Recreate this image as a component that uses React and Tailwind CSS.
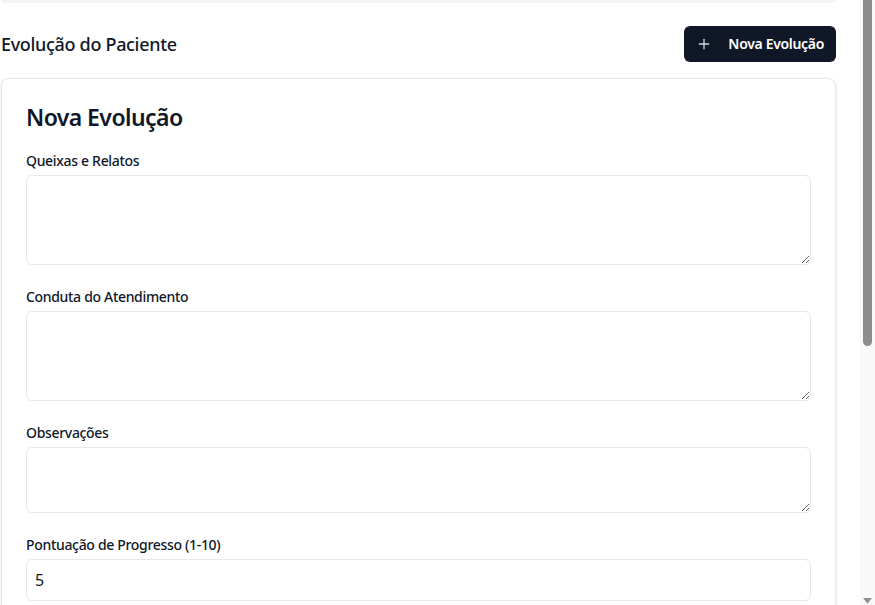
import { Plus } from 'lucide-react';

const Field = ({ label, children }) => (
  <div className="flex flex-col gap-[7px]">
    <label className="text-sm font-medium leading-none text-gray-900">{label}</label>
    {children}
  </div>
);

// the page's own scrollbar, as the screenshot shows it
const Scrollbar = () => (
  <div className="flex h-full w-[15px] shrink-0 flex-col items-center bg-[#f9f9f9]">
    <div className="h-[346px] w-[9px] rounded-b-full bg-[#8d8d8d]" />
    <div className="flex-1" />
    <svg width="9" height="6" viewBox="0 0 9 6" className="mb-[1px]">
      <path d="M0 0 H9 L4.5 5.5 Z" fill="#8d8d8d" />
    </svg>
  </div>
);

const App = () => {
  return (
    <div
      className="flex h-screen overflow-hidden bg-white text-gray-900 tracking-[-0.02em]"
      style={{ fontFamily: '"Noto Sans", "Open Sans", Arial, sans-serif' }}
    >
      <div className="w-[860px] shrink-0 overflow-hidden pr-6">
        <div className="ml-[1px] h-[3px] rounded-b-lg bg-gray-100" />

        <div className="mt-[23px] mb-4 flex items-center justify-between pl-[1px]">
          <h2 className="text-lg font-medium text-gray-900">Evolução do Paciente</h2>
          <button className="flex h-9 items-center gap-4 rounded-md bg-gray-900 px-3 text-sm font-semibold text-white">
            <Plus className="h-4 w-4 text-gray-300" strokeWidth={2} />
            Nova Evolução
          </button>
        </div>

        <div className="ml-[1px] rounded-lg border border-gray-200 bg-white p-6 shadow-sm">
          <h3 className="mb-[23px] text-[23px] font-semibold leading-7 tracking-[-0.025em] text-gray-900">
            Nova Evolução
          </h3>

          <div className="flex flex-col gap-[25px]">
            <Field label="Queixas e Relatos">
              <textarea className="h-[90px] w-full rounded-md border border-gray-200 px-3 py-2 text-sm outline-none" />
            </Field>
            <Field label="Conduta do Atendimento">
              <textarea className="h-[90px] w-full rounded-md border border-gray-200 px-3 py-2 text-sm outline-none" />
            </Field>
            <Field label="Observações">
              <textarea className="h-[66px] w-full rounded-md border border-gray-200 px-3 py-2 text-sm outline-none" />
            </Field>
            <Field label="Pontuação de Progresso (1-10)">
              <input
                type="number"
                min="1"
                max="10"
                defaultValue="5"
                className="h-[42px] w-full rounded-md border border-gray-200 px-2 text-base outline-none"
              />
            </Field>
          </div>
        </div>
      </div>
      <div className="flex-1" />
      <Scrollbar />
    </div>
  );
};

export default App;
